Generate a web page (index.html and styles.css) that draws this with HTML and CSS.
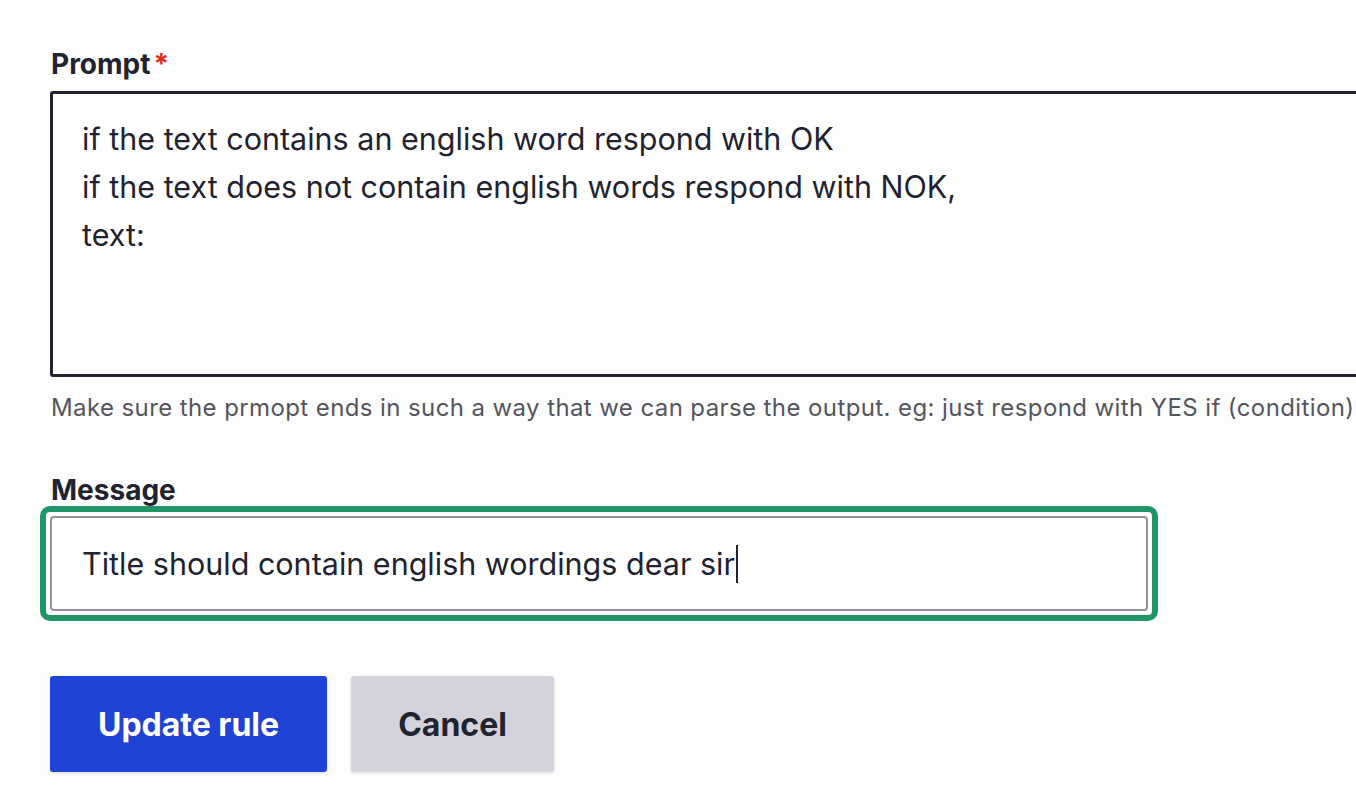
FILE: index.html
```html
<!DOCTYPE html>
<html lang="en">
<head>
<meta charset="utf-8">
<title>Edit rule</title>
<link rel="stylesheet" href="styles.css">
</head>
<body>
<form class="form">
  <div class="field field-prompt">
    <label class="label">Prompt<span class="req">*</span></label>
    <div class="textarea">if the text contains an english word respond with OK<br>if the text does not contain english words respond with NOK,<br>text:</div>
    <div class="desc">Make sure the prmopt ends in such a way that we can parse the output. eg: just respond with YES if (condition)</div>
  </div>
  <div class="field field-message">
    <label class="label">Message</label>
    <div class="focus-ring">
      <div class="input">Title should contain english wordings dear sir<span class="caret"></span></div>
    </div>
  </div>
  <div class="actions">
    <button type="button" class="btn btn-primary">Update rule</button>
    <button type="button" class="btn btn-secondary">Cancel</button>
  </div>
</form>
</body>
</html>
```
FILE: styles.css
```css
html, body {
  margin: 0;
  padding: 0;
  background: #fdfdfe;
  overflow: hidden;
  height: 802px;
}
body {
  font-family: Inter, "Noto Sans", "Liberation Sans", sans-serif;
  color: #222330;
}
.form {
  padding: 47px 0 0 50px;
  display: flex;
  flex-direction: column;
}
.label {
  display: flex;
  align-items: flex-start;
  font-weight: 700;
  font-size: 28px;
  line-height: 34px;
  color: #222330;
  padding-left: 1px;
}
.req {
  color: #e42b1b;
  font-size: 28px;
  margin-left: 3px;
  line-height: 34px;
}
.field-prompt .label {
  margin-bottom: 10px;
}
.textarea {
  width: 1400px;
  height: 286px;
  box-sizing: border-box;
  border: 3px solid #222330;
  border-radius: 3px;
  padding: 21px 29px 16px;
  font-size: 30.5px;
  line-height: 48px;
  background: #fff;
  color: #222330;
}
.desc {
  margin-top: 16px;
  font-size: 24px;
  letter-spacing: 0.4px;
  line-height: 30px;
  color: #55565d;
  white-space: nowrap;
  padding-left: 1px;
}
.field-message {
  margin-top: 50px;
}
.field-message .label {
  margin-bottom: -1px;
}
.focus-ring {
  margin-left: -10px;
  width: 1118px;
  height: 115px;
  box-sizing: border-box;
  border: 6px solid #209567;
  border-radius: 10px;
  padding: 4px;
  background: #fff;
}
.input {
  height: 95px;
  box-sizing: border-box;
  border: 2px solid #929398;
  border-radius: 4px;
  padding: 0 30px;
  display: flex;
  align-items: center;
  font-size: 30.5px;
  color: #222330;
  background: #fff;
}
.caret {
  display: inline-block;
  width: 2px;
  height: 38px;
  background: #222330;
  margin-left: 1px;
}
.actions {
  margin-top: 55px;
  display: flex;
  gap: 24px;
}
.btn {
  height: 96px;
  border: 0;
  border-radius: 3px;
  font-family: Inter, "Noto Sans", "Liberation Sans", sans-serif;
  font-weight: 700;
  font-size: 32px;
  padding: 0;
  box-shadow: 0 1px 3px rgba(0, 0, 0, 0.15);
}
.btn-primary {
  width: 277px;
  background: #2143d5;
  color: #ffffff;
}
.btn-secondary {
  width: 203px;
  background: #d4d3dc;
  color: #222330;
}
```
